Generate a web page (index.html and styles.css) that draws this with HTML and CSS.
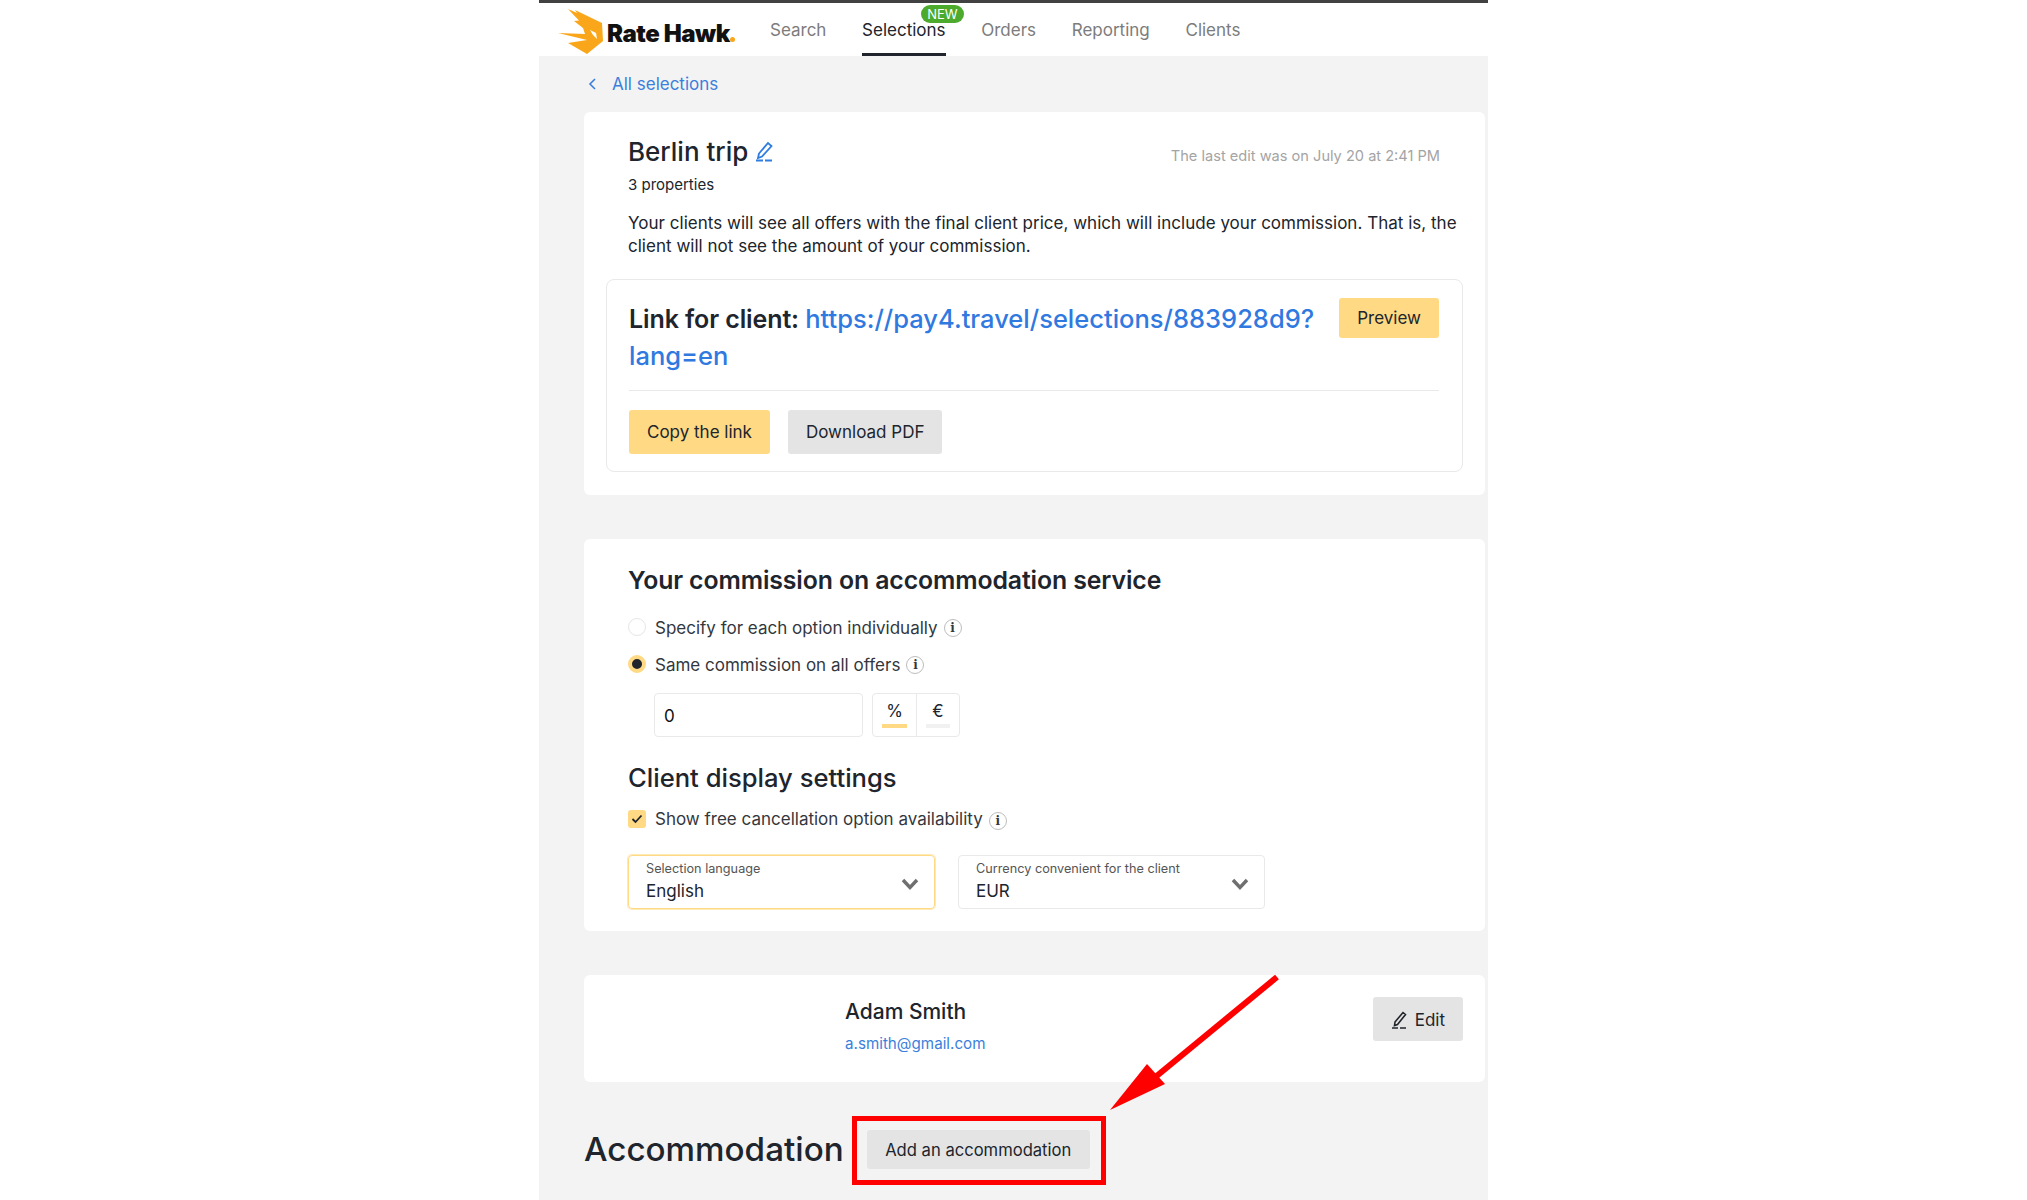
FILE: index.html
```html
<!DOCTYPE html>
<html>
  <head>
    <meta charset="utf-8">
    <title>Berlin trip</title>
    <link rel="stylesheet" href="styles.css">
  </head>
  <body>
    <div id="app">
      <div class="header">
        <div class="logo">
          <svg class="logoMark" width="50" height="46" viewBox="0 0 50 46">
            <path fill="#faa61a" d="M10 0 L19 4 L17 1 L44 14 L45 32 L29 45 L10 34 L29 31 L0 24 L27 25 L25 19 L16 12 L21 11.5 Z"/>
            <path fill="#fff" d="M32 21 L38 24 L39 30 L35 26 Z"/>
          </svg>
          <span class="logoText">Rate Hawk</span><span class="logoDot"></span>
        </div>
        <div class="nav">
          <a class="navItem">Search</a>
          <a class="navItem active">Selections<span class="badge">NEW</span></a>
          <a class="navItem">Orders</a>
          <a class="navItem">Reporting</a>
          <a class="navItem">Clients</a>
        </div>
      </div>

      <div class="content">
        <a class="back">
          <svg width="9" height="14" viewBox="0 0 9 14"><path d="M7 2 L2 7 L7 12" fill="none" stroke="#3b7fdc" stroke-width="1.6"/></svg>
          All selections
        </a>

        <div class="card" id="summary">
          <div class="row between">
            <h1 class="title">Berlin trip
              <svg class="pen" width="20" height="22" viewBox="0 0 20 22">
                <path d="M4 13.5 L13 3 L16.5 6 L7 16.5 L3 18 Z" fill="none" stroke="#2f7de1" stroke-width="1.8"/>
                <path d="M1 20.5 H19" stroke="#2f7de1" stroke-width="1.8" stroke-dasharray="7 2"/>
              </svg>
            </h1>
            <div class="lastEdit">The last edit was on July 20 at 2:41 PM</div>
          </div>
          <div class="count">3 properties</div>
          <p class="note">Your clients will see all offers with the final client price, which will include your commission. That is, the client will not see the amount of your commission.</p>

          <div class="linkBox">
            <div class="row between top">
              <h2 class="linkText">Link for client: <a>https://pay4.travel/selections/883928d9?</a> <a>lang=en</a></h2>
              <button class="btn yellow preview">Preview</button>
            </div>
            <div class="linkActions">
              <button class="btn yellow">Copy the link</button>
              <button class="btn grey">Download PDF</button>
            </div>
          </div>
        </div>

        <div class="card" id="commission">
          <h2 class="section first">Your commission on accommodation service</h2>
          <div class="option">
            <span class="radio"></span>Specify for each option individually
            <span class="info">i</span>
          </div>
          <div class="option">
            <span class="radio on"></span>Same commission on all offers
            <span class="info">i</span>
          </div>
          <div class="amount">
            <div class="amountInput">0</div>
            <div class="unit">
              <div class="unitCell"><span>%</span><i class="mark on"></i></div>
              <div class="unitCell"><span>€</span><i class="mark"></i></div>
            </div>
          </div>
          <h2 class="section second">Client display settings</h2>
          <div class="option check">
            <span class="checkbox">
              <svg width="12" height="10" viewBox="0 0 12 10"><path d="M1.5 5 L4.5 8 L10.5 1.5" fill="none" stroke="#20242c" stroke-width="1.8"/></svg>
            </span>Show free cancellation option availability
            <span class="info low">i</span>
          </div>
          <div class="selects">
            <div class="select focus">
              <div>
                <div class="selectLabel">Selection language</div>
                <div class="selectValue">English</div>
              </div>
              <svg class="chevron" width="18" height="12" viewBox="0 0 18 12"><path d="M2 2 L9 9.5 L16 2" fill="none" stroke="#6f6f6f" stroke-width="3.4"/></svg>
            </div>
            <div class="select">
              <div>
                <div class="selectLabel">Currency convenient for the client</div>
                <div class="selectValue">EUR</div>
              </div>
              <svg class="chevron" width="18" height="12" viewBox="0 0 18 12"><path d="M2 2 L9 9.5 L16 2" fill="none" stroke="#6f6f6f" stroke-width="3.4"/></svg>
            </div>
          </div>
        </div>

        <div class="card" id="client">
          <div class="clientInfo">
            <div class="clientName">Adam Smith</div>
            <a class="clientMail">a.smith@gmail.com</a>
          </div>
          <button class="btn grey edit">
            <svg width="18" height="20" viewBox="0 0 18 20">
              <path d="M4 12 L12 2.5 L14.5 4.5 L6.5 14.5 L3.5 15.5 Z" fill="none" stroke="#20242c" stroke-width="1.6"/>
              <path d="M1 18 H16" stroke="#20242c" stroke-width="1.6" stroke-dasharray="6 2"/>
            </svg>
            Edit
          </button>
        </div>

        <div class="accommodation">
          <h2>Accommodation</h2>
          <button class="btn grey add">Add an accommodation</button>
        </div>
      </div>

      <!-- annotation drawn over the screenshot -->
      <svg class="annotation" width="2027" height="1200" viewBox="0 0 2027 1200">
        <path d="M1277 977 L1153 1079" stroke="#f00" stroke-width="6" fill="none"/>
        <path d="M1110 1110 L1147 1064 L1165 1084 Z" fill="#f00"/>
        <rect x="854.5" y="1118.5" width="249" height="64" fill="none" stroke="#f00" stroke-width="5"/>
      </svg>
    </div>
  </body>
</html>
```

FILE: styles.css
```css
* {
    box-sizing: border-box;
}
html, body {
    margin: 0;
    height: 1200px;
    overflow: hidden;
    background: #fff;
}
body {
    font-family: Inter, "Liberation Sans", sans-serif;
    color: #20242c;
}
h1, h2, p {
    margin: 0;
}
a {
    color: #3079e0;
}
button {
    font-family: inherit;
    border: 0;
}

#app {
    width: 949px;
    height: 1200px;
    margin-left: 539px;
    background: #f3f3f3;
    border-top: 3px solid #414141;
}
.annotation {
    position: absolute;
    left: 0;
    top: 0;
}

.header {
    display: flex;
    align-items: center;
    height: 53px;
    background: #fff;
}
.logo {
    display: flex;
    align-items: center;
    width: 231px;
    padding-left: 19px;
}
.logoMark {
    flex: none;
    margin-top: 5px;
}
.logoText {
    margin: 7px 0 0 -1px;
    font-weight: 900;
    font-size: 24px;
    letter-spacing: -0.45px;
    color: #111;
    white-space: nowrap;
}
.logoDot {
    flex: none;
    width: 5px;
    height: 5px;
    border-radius: 50%;
    background: #faa61a;
    margin-top: 20px;
}
.nav {
    display: flex;
    gap: 35.7px;
    height: 100%;
}
.navItem {
    position: relative;
    display: flex;
    align-items: center;
    height: 100%;
    font-size: 17px;
    color: #7c7c7c;
}
.navItem.active {
    color: #20242c;
    border-bottom: 3px solid #20242c;
    padding-top: 3px;
}
.badge {
    position: absolute;
    top: 2px;
    right: -18px;
    padding: 0 6px;
    height: 18px;
    line-height: 18px;
    border-radius: 9px;
    background: #4caa2d;
    color: #fff;
    font-size: 13px;
}

.content {
    padding: 0 3px 0 45px;
}
.back {
    display: flex;
    align-items: center;
    gap: 15px;
    height: 56px;
    padding-left: 4px;
    font-size: 17px;
    color: #3b7fdc;
}
.card {
    background: #fff;
    border-radius: 6px;
    margin-bottom: 44px;
}
.row {
    display: flex;
}
.between {
    justify-content: space-between;
    align-items: center;
}
.top {
    align-items: flex-start;
}

#summary {
    height: 383px;
    padding: 22px 22px 0 44px;
}
#summary > .row {
    padding-right: 23px;
}
.title {
    font-size: 26px;
    line-height: 36px;
    font-weight: 500;
}
.pen {
    vertical-align: -1px;
}
.lastEdit {
    font-size: 14.6px;
    color: #a4a4a4;
    margin-top: 8px;
}
.count {
    font-size: 15px;
    line-height: 20px;
    margin-top: 5px;
}
.note {
    font-size: 17px;
    line-height: 23px;
    margin-top: 17px;
    letter-spacing: 0.02px;
}
.linkBox {
    margin: 21px 0 0 -22px;
    height: 193px;
    padding: 21px 23px 0 22px;
    border: 1px solid #e9e9e9;
    border-radius: 8px;
}
.linkText {
    width: 720px;
    font-size: 25px;
    line-height: 36.5px;
    font-weight: 600;
    letter-spacing: -0.1px;
}
.linkText a {
    font-size: 25.5px;
    font-weight: 500;
    letter-spacing: 0;
}
.btn {
    height: 44px;
    padding: 0 18px;
    border-radius: 3px;
    font-size: 17px;
    color: #20242c;
}
.yellow {
    background: #ffd983;
}
.grey {
    background: #e4e4e4;
}
.preview {
    height: 40px;
    margin-top: -3px;
}
.linkActions {
    display: flex;
    gap: 18px;
    margin-top: 16px;
    padding-top: 19px;
    border-top: 1px solid #e9e9e9;
}

#commission {
    height: 392px;
    padding: 24px 44px 0;
}
.section {
    font-size: 25.6px;
    line-height: 34px;
    font-weight: 500;
}
.section.first {
    font-size: 24.8px;
    font-weight: 600;
    letter-spacing: -0.1px;
}
.option {
    display: flex;
    align-items: center;
    gap: 9px;
    height: 24px;
    margin-top: 13px;
    font-size: 17px;
    color: #33373e;
}
.option:first-of-type {
    margin-top: 19px;
}
.radio {
    width: 18px;
    height: 18px;
    margin: -2px 0 0;
    border-radius: 50%;
    border: 1px solid #e6e6e6;
}
.radio.on {
    background: #20242c;
    border: 4px solid #ffd983;
}
.info {
    width: 18px;
    height: 18px;
    margin-left: -3px;
    border: 1px solid #bdbdbd;
    border-radius: 50%;
    text-align: center;
    font: bold 12px/16px "DejaVu Serif", serif;
}
.info.low {
    margin-top: 3px;
}
.amount {
    display: flex;
    gap: 9px;
    margin: 16px 0 0 26px;
}
.amountInput {
    width: 209px;
    height: 44px;
    padding-left: 9px;
    border: 1px solid #e9e9e9;
    border-radius: 4px;
    font-size: 17px;
    line-height: 44px;
    color: #111;
}
.unit {
    display: flex;
    height: 44px;
    border: 1px solid #e9e9e9;
    border-radius: 4px;
}
.unitCell {
    width: 43px;
    padding: 7px 9px 0;
    text-align: center;
    font-size: 17px;
}
.unitCell + .unitCell {
    border-left: 1px solid #e9e9e9;
}
.unitCell span {
    display: block;
    height: 23px;
}
.mark {
    display: block;
    height: 4px;
    background: #f1f1f1;
}
.mark.on {
    background: #ffd983;
}
.second {
    margin-top: 24px;
}
.option.check {
    margin-top: 12px;
}
.checkbox {
    display: flex;
    align-items: center;
    justify-content: center;
    width: 18px;
    height: 18px;
    border-radius: 3px;
    background: #ffd983;
}
.selects {
    display: flex;
    gap: 23px;
    margin-top: 24px;
}
.select {
    display: flex;
    justify-content: space-between;
    width: 307px;
    height: 54px;
    padding: 5px 15px 0 17px;
    border: 1px solid #e9e9e9;
    border-radius: 4px;
}
.select.focus {
    border-color: #ffd983;
    box-shadow: 0 0 0 1px #ffe9b5;
}
.chevron {
    margin-top: 17px;
}
.selectLabel {
    font-size: 12.7px;
    line-height: 16px;
    color: #555;
}
.selectValue {
    margin-top: 2px;
    font-size: 17px;
    line-height: 25px;
}

#client {
    display: flex;
    justify-content: space-between;
    height: 107px;
    padding: 22px 22px 0 261px;
}
.clientName {
    margin-top: 2px;
    font-size: 21px;
    line-height: 26px;
    font-weight: 500;
}
.clientMail {
    display: block;
    margin-top: 9px;
    font-size: 15.2px;
    color: #3b7fdc;
}
.edit {
    display: flex;
    align-items: center;
    gap: 6px;
    padding: 2px 18px 0;
}
.accommodation {
    display: flex;
    align-items: center;
    gap: 23px;
    margin-top: 1px;
}
.accommodation h2 {
    font-size: 33.2px;
    line-height: 46px;
    font-weight: 500;
}
.add {
    height: 39px;
    margin-top: 1px;
    padding: 0 18.5px;
    font-size: 16.6px;
}
```
